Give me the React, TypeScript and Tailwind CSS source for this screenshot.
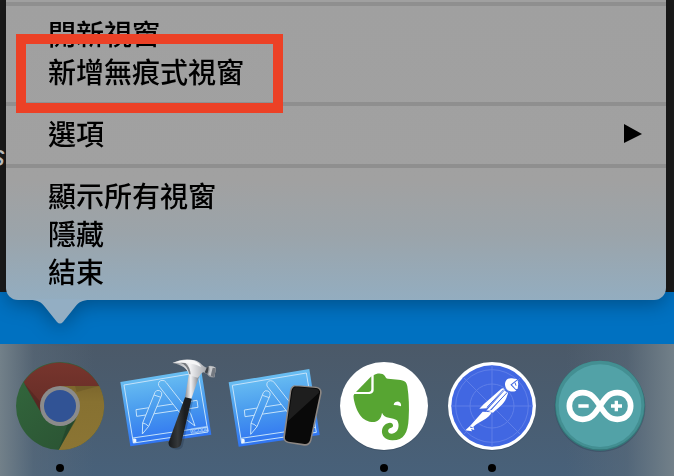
import type { ReactNode } from 'react';

const groups: { label: string; submenu?: boolean }[][] = [
  [{ label: '開新視窗' }, { label: '新增無痕式視窗' }],
  [{ label: '選項', submenu: true }],
  [{ label: '顯示所有視窗' }, { label: '隱藏' }, { label: '結束' }],
];

function Chrome() {
  return (
    <svg viewBox="18 12 324 336" className="block h-28 w-full" aria-hidden="true">
      <defs>
        <linearGradient id="cg" x1="0" y1="0" x2="1" y2="1">
          <stop offset="0" stopColor="#33683d" />
          <stop offset="1" stopColor="#294f31" />
        </linearGradient>
        <linearGradient id="cr" x1="0" y1="0" x2="0" y2="1">
          <stop offset="0" stopColor="#77352d" />
          <stop offset="1" stopColor="#642c26" />
        </linearGradient>
        <linearGradient id="cy" x1="0" y1="0" x2="0" y2="1">
          <stop offset="0" stopColor="#7d672d" />
          <stop offset="0.25" stopColor="#877131" />
          <stop offset="1" stopColor="#8b7534" />
        </linearGradient>
      </defs>
      <circle cx="180" cy="198" r="132" fill="url(#cg)" />
      <path d="M180 198V138H298A132 132 0 0 1 176 330L232 228Z" fill="url(#cy)" />
      <path d="M180 138H297A132 132 0 0 0 71 126L123 217L180 198Z" fill="url(#cr)" />
      <path d="M225 138H297L230 156Z" fill="#5f4e24" opacity=".4" />
      <path d="M71 128L122 216L121 185Z" fill="#43201b" opacity=".4" />
      <path d="M176 329L229 238L202 254Z" fill="#1c3924" opacity=".5" />
      <circle cx="180" cy="198" r="60" fill="#8b8b8b" />
      <circle cx="180" cy="198" r="48" fill="#315395" />
    </svg>
  );
}

function Blueprint({ id }: { id: string }) {
  return (
    <g>
      <defs>
        <linearGradient id={id} gradientUnits="userSpaceOnUse" x1="140" y1="85" x2="170" y2="295">
          <stop offset="0" stopColor="#6bc0f2" />
          <stop offset="0.5" stopColor="#489aee" />
          <stop offset="1" stopColor="#2f72f2" />
        </linearGradient>
      </defs>
      <path d="M20 112L262 72L293 270L50 305Z" fill={`url(#${id})`} />
      <g fill="none" stroke="#c4e2fa" strokeWidth="3" strokeLinejoin="round">
        <path d="M31 121L253 84L283 262L59 295ZM57 280L281 247" />
        <path d="M67 195L250 167L253 188L69 215Z" />
        <path d="M135 123Q132 109 145 107Q153 106 158 114L231 207L244 244L209 218Z" fill={`url(#${id})`} />
        <path d="M124 143Q128 134 138 138Q147 142 144 151L105 245L86 268L87 235ZM121 151L142 158M87 235Q96 236 105 245" fill={`url(#${id})`} />
      </g>
      <path d="M58 282Q65 280 68 284V293L59 295Z" fill="#eff7ff" />
    </g>
  );
}

function Xcode() {
  return (
    <svg viewBox="6 -3 324 336" className="block h-28 w-full" aria-hidden="true">
      <defs>
        <linearGradient id="steel">
          <stop offset="0" stopColor="#878b91" />
          <stop offset=".4" stopColor="#f3f3f5" />
          <stop offset="1" stopColor="#777b82" />
        </linearGradient>
        <linearGradient id="grip">
          <stop offset="0" stopColor="#17191b" />
          <stop offset=".4" stopColor="#35383a" />
          <stop offset=".7" stopColor="#1b1d1f" />
        </linearGradient>
      </defs>
      <g transform="translate(5 -1)">
        <Blueprint id="sheetA" />
      </g>
      <path d="M235 252L286 244L289 257L238 265Z" fill="none" stroke="#a7cdfb" strokeWidth="2" />
      <text x="237" y="264" transform="rotate(-8 237 264)" fontSize="15" fill="#c6e0fc" className="font-['Liberation_Sans']">
        XCODE
      </text>
      <path d="M224 158L240 160L208 300Q203 312 185 309Q168 306 170 293Z" fill="#13233b" opacity=".25" transform="translate(4 4)" />
      <path d="M231 84L262 92L238 162L219 158Z" fill="url(#steel)" />
      <path d="M219 157L239 161L207 298Q203 311 184 309Q167 306 170 292Z" fill="url(#grip)" />
      <path d="M181 54C205 42 228 41 248 46C267 52 271 64 284 68L290 63Q304 61 312 69L307 97Q293 100 286 88L275 82C266 83 265 94 257 98L231 91C228 70 210 60 181 54Z" fill="url(#steel)" />
      <path d="M181 54C207 43 230 43 248 48Q263 54 267 66C248 55 215 52 181 54Z" fill="#f6f6f7" />
      <path d="M284 68L278 82L286 87Q290 74 290 64Z" fill="#3f444a" />
      <path d="M291 64Q304 62 312 69L307 97Q295 95 289 88Q296 77 291 64Z" fill="#c9cbce" />
      <path d="M302 68L312 70L307 97L296 93Z" fill="#747980" />
      <path d="M205 53Q226 60 232 88L236 88Q234 65 220 54Z" fill="#4e5359" opacity=".7" />
    </svg>
  );
}

function Simulator() {
  return (
    <svg viewBox="0 -3 324 336" className="block h-28 w-full" aria-hidden="true">
      <Blueprint id="sheetB" />
      <path d="M217 120L283 125Q300 128 299 144L268 288Q263 303 247 302L198 294Q182 290 184 274L204 136Q207 121 221 120Z" fill="#8d8783" />
      <path d="M221 124L282 129Q296 131 294 145L264 286Q260 298 248 297L200 290Q187 287 189 275L208 138Q211 124 223 124Z" fill="#090909" />
      <path d="M222 126L281 131Q292 133 291 143L198 228L211 139Q213 126 224 126Z" fill="#1e1e1e" />
    </svg>
  );
}

function Evernote() {
  return (
    <svg viewBox="0 -3 324 336" className="block h-28 w-full" aria-hidden="true">
      <circle cx="162" cy="186" r="132" fill="#33465a" opacity=".5" />
      <circle cx="162" cy="183" r="132" fill="#fff" />
      <g fill="#57a532">
        <path d="M78 141L124 94V132Q124 141 115 141Z" />
        <path d="M131 91C140 84 158 84 164 92C167 96 168 101 174 101L205 104C225 106 230 111 232 124Q239 170 236 220C234 265 221 287 186 286C164 286 154 270 156 256C158 242 168 234 180 233C191 234 192 246 184 248C170 250 172 267 186 266C207 264 210 238 201 226C190 217 162 222 156 203C153 223 143 232 125 231C91 229 76 190 71 160Q69 151 73 147H119Q130 146 131 136Z" />
      </g>
      <path d="M191 180C192 171 200 169 206 170C213 172 214 179 213 184Q202 180 191 180Z" fill="#fff" />
    </svg>
  );
}

function Postman() {
  return (
    <svg viewBox="0 -3 324 336" className="block h-28 w-full" aria-hidden="true">
      <circle cx="162" cy="186" r="132" fill="#33465a" opacity=".5" />
      <circle cx="162" cy="183" r="132" fill="#fff" />
      <circle cx="162" cy="183" r="122" fill="#4167e2" />
      <g fill="none" stroke="#5f7fe8" strokeWidth="3">
        <circle cx="162" cy="183" r="109" />
        <circle cx="162" cy="183" r="66" />
        <path d="M162 61V305M40 183H284M76 97L248 269M76 269L248 97" />
      </g>
      <g fill="#fff">
        <path d="M201 119C201 104 212 98 222 100L238 103L217 119L235 137C218 144 202 136 201 119Z" />
        <path d="M222 119L239 106Q243 119 239 131L234 133Z" />
        <path d="M190 131Q197 128 200 134L146 190L124 191L137 178Z" />
        <path d="M200 136L207 143L158 194L145 197Z" />
        <path d="M208 140Q212 145 208 151C201 175 188 183 165 203L148 197L161 195Z" />
        <path d="M134 200L161 202C151 223 125 229 106 245L109 255L99 252L102 259L82 256L96 243Z" />
      </g>
      <path d="M197 134L147 187M207 143L158 195M231 113L234 122M96 246L104 248" fill="none" stroke="#4167e2" strokeWidth="3" />
    </svg>
  );
}

function Arduino() {
  return (
    <svg viewBox="0 -3 324 336" className="block h-28 w-full" aria-hidden="true">
      <circle cx="162" cy="185" r="136" fill="#30455a" opacity=".45" />
      <circle cx="162" cy="182" r="135" fill="#347779" />
      <circle cx="162" cy="180" r="133" fill="#438f92" />
      <circle cx="162" cy="182" r="124" fill="#52a2a7" />
      <path
        d="M162 183C148 161 136 143 110 143C85 143 70 161 70 183C70 206 86 223 110 223C136 223 148 205 162 183C176 161 188 143 214 143C239 143 254 161 254 183C254 206 239 223 214 223C188 223 176 205 162 183Z"
        fill="none"
        stroke="#fff"
        strokeWidth="17"
      />
      <path d="M97 183H128M195 183H228M211 167V199" stroke="#fff" strokeWidth="10" />
    </svg>
  );
}

const apps: { name: string; icon: ReactNode; running: boolean }[] = [
  { name: 'Google Chrome', icon: <Chrome />, running: true },
  { name: 'Xcode', icon: <Xcode />, running: false },
  { name: 'Simulator', icon: <Simulator />, running: false },
  { name: 'Evernote', icon: <Evernote />, running: true },
  { name: 'Postman', icon: <Postman />, running: true },
  { name: 'Arduino', icon: <Arduino />, running: false },
];

function ContextMenu() {
  return (
    <div className="relative ml-1.5 mr-2 drop-shadow-[0_4px_10px_rgba(0,0,0,0.3)]">
      <div
        role="menu"
        className="rounded-b-xl bg-[linear-gradient(to_bottom,#a0a0a0_0%,#a1a1a1_60%,#9ba4aa_78%,#93adc0_100%)] pt-0.5"
      >
        {groups.map((group, i) => (
          <div
            key={i}
            role="group"
            className="border-t-4 border-[#8f8f8f] pt-2 pb-3 last:pb-2.5"
          >
            {group.map((item) => (
              <button
                key={item.label}
                type="button"
                role="menuitem"
                className="flex h-[38px] w-full items-center justify-between pr-6 pl-[42px] text-left text-[28px] leading-[38px] font-medium text-black"
              >
                {item.label}
                {item.submenu && (
                  <svg viewBox="0 0 18 20" className="h-5 w-[18px]" aria-hidden="true">
                    <path d="M0 1L18 11L0 20Z" />
                  </svg>
                )}
              </button>
            ))}
          </div>
        ))}
      </div>
      <svg viewBox="0 0 60 25" className="-mt-px ml-6 block h-[25px] w-[60px]" aria-hidden="true">
        <path d="M0 0V1C8 1 11 3 15 8L27 23Q30 26 33 23L45 8C49 3 52 1 60 1V0Z" fill="#93aec3" />
      </svg>
      <div className="pointer-events-none absolute top-[34px] left-2.5 h-[79px] w-[267px] border-10 border-[#ec4126]" />
    </div>
  );
}

export default function App() {
  return (
    <main className="flex min-h-screen flex-col overflow-hidden bg-[#1b1b1b] font-['Noto_Sans_CJK_TC','Noto_Sans_CJK_SC',sans-serif]">
      <section className="relative grow bg-[linear-gradient(to_top,#0071c1_52px,#1b1b1b_52px)] pb-5">
        <span className="absolute top-[138px] -left-2.5 font-['Liberation_Sans',sans-serif] text-3xl text-[#d0d0d0] italic">
          s
        </span>
        <ContextMenu />
      </section>
      <nav
        aria-label="Dock"
        className="flex bg-[linear-gradient(to_right,#728089_0%,#5c6c7a80_5%,#4b5c6d00_14%,#4b5c6d00_84%,#5c6c7a80_93%,#728089_100%),linear-gradient(to_bottom,#4b5968,#48617a)] pr-5 pl-1.5"
      >
        {apps.map((app) => (
          <button key={app.name} type="button" aria-label={app.name} className="flex-1 pb-1">
            {app.icon}
            <span className={`mx-auto mt-2 block size-2 rounded-full ${app.running ? 'bg-black' : ''}`} />
          </button>
        ))}
      </nav>
    </main>
  );
}
